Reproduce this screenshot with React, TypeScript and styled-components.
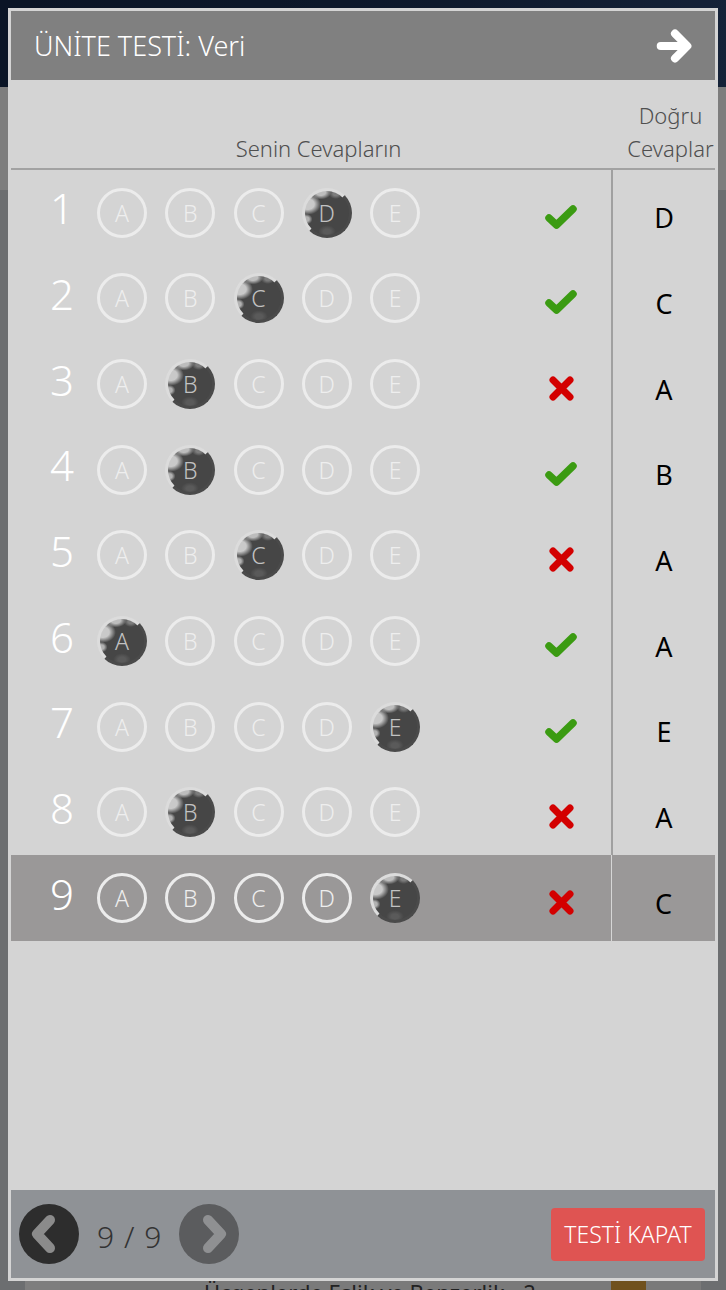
import styled, { createGlobalStyle } from "styled-components";

const GlobalStyle = createGlobalStyle`
  html, body {
    margin: 0;
    padding: 0;
  }
  body {
    width: 726px;
    height: 1290px;
    overflow: hidden;
    font-family: "Noto Sans", "Open Sans", sans-serif;
  }
`;

type Letter = "A" | "B" | "C" | "D" | "E";

interface IAnswer {
  no: number;
  chosen: Letter;
  correct: Letter;
}

const LETTERS: Letter[] = ["A", "B", "C", "D", "E"];

const ANSWERS: IAnswer[] = [
  { no: 1, chosen: "D", correct: "D" },
  { no: 2, chosen: "C", correct: "C" },
  { no: 3, chosen: "B", correct: "A" },
  { no: 4, chosen: "B", correct: "B" },
  { no: 5, chosen: "C", correct: "A" },
  { no: 6, chosen: "A", correct: "A" },
  { no: 7, chosen: "E", correct: "E" },
  { no: 8, chosen: "B", correct: "A" },
  { no: 9, chosen: "E", correct: "C" },
];

const ACTIVE_QUESTION = 9;

const LESSONS = ["Üçgenlerde Eşlik ve Benzerlik - 2 -"];

/* ---------- page behind the dialog ---------- */

const Page = styled.div`
  display: flex;
  flex-direction: column;
  height: 1290px;
  overflow: hidden;
  background: #d8dce0;
`;

const NavBar = styled.header`
  height: 87px;
  flex-shrink: 0;
  background: linear-gradient(90deg, #14284a 0%, #1c3358 60%, #2a4470 100%);
`;

const SubBar = styled.div`
  height: 103px;
  flex-shrink: 0;
  background: #fafafa;
`;

const LessonList = styled.ul`
  list-style: none;
  margin: auto 0 -42px;
  padding: 0 25px;
`;

const LessonItem = styled.li`
  height: 80px;
  display: flex;
  align-items: center;
  padding-left: 144px;
  background: #f4f4f4;
  border-left: 35px solid #fcfcfc;
  font-size: 22px;
  color: #444444;
`;

const LessonBadge = styled.span`
  margin-left: auto;
  margin-right: 55px;
  width: 35px;
  height: 35px;
  border-radius: 3px;
  background: #e0a23a;
`;

const Backdrop = styled.div`
  position: fixed;
  inset: 0;
  background: rgba(0, 0, 0, 0.5);
`;

/* ---------- dialog ---------- */

const Dialog = styled.section`
  position: fixed;
  top: 8px;
  left: 8px;
  width: 710px;
  height: 1273px;
  box-sizing: border-box;
  padding: 3px;
  display: flex;
  flex-direction: column;
  background: #d4d4d4;
`;

const DialogHeader = styled.div`
  height: 69px;
  flex-shrink: 0;
  display: flex;
  align-items: center;
  justify-content: space-between;
  padding: 0 21px 0 23px;
  background: #808080;
`;

const Title = styled.h1`
  margin: 0;
  font-size: 27px;
  font-weight: 300;
  font-stretch: semi-condensed;
  color: #ffffff;
`;

const IconButton = styled.button`
  display: flex;
  padding: 0;
  border: none;
  background: none;
  cursor: pointer;
`;

const ColumnHeads = styled.div`
  height: 90px;
  flex-shrink: 0;
  box-sizing: border-box;
  display: grid;
  grid-template-columns: 1fr 104px;
  align-items: end;
  padding-bottom: 3px;
  border-bottom: 2px solid #a2a2a2;
`;

const HeadText = styled.div<{ $shift: number }>`
  font-size: 22px;
  font-weight: 300;
  font-stretch: semi-condensed;
  line-height: 33px;
  color: #4f4f4f;
  text-align: center;
  white-space: nowrap;
  padding-left: ${(p) => p.$shift}px;
`;

const Rows = styled.div`
  display: flex;
  flex-direction: column;
`;

const Row = styled.div<{ $active: boolean }>`
  height: 85.67px;
  display: grid;
  grid-template-columns: 1fr 104px;
  background: ${(p) => (p.$active ? "#9a9898" : "transparent")};
`;

const AnswerCell = styled.div`
  display: flex;
  align-items: center;
  padding-left: 25px;
`;

const QuestionNo = styled.span`
  width: 52px;
  margin-right: 9px;
  margin-bottom: 10px;
  text-align: center;
  font-size: 42px;
  font-weight: 300;
  color: #ffffff;
`;

const Bubbles = styled.div`
  display: flex;
  gap: 18.25px;
`;

// pencil-filled bubble: dark fill with ragged light gaps near the top-left rim
const Bubble = styled.span<{ $filled: boolean }>`
  width: 50px;
  height: 50px;
  box-sizing: border-box;
  border-radius: 50%;
  border: 3px solid #ececec;
  display: flex;
  align-items: center;
  justify-content: center;
  font-size: 23px;
  font-weight: 300;
  font-stretch: semi-condensed;
  color: ${(p) => (p.$filled ? "#c2c2c2" : "#eeeeee")};
  ${(p) =>
    p.$filled &&
    `
    border-color: #dcdcdc #4a4a4a #4a4a4a #dcdcdc;
    background:
      radial-gradient(ellipse 30% 24% at 6% 30%, #c9c9c9 0 50%, transparent 100%),
      radial-gradient(ellipse 24% 16% at 36% 3%, #bdbdbd 0 45%, transparent 100%),
      radial-gradient(ellipse 14% 12% at 3% 64%, #b2b2b2 0 45%, transparent 100%),
      radial-gradient(ellipse 16% 12% at 70% 6%, #7c7c7c 0 40%, transparent 100%),
      radial-gradient(ellipse 20% 14% at 50% 92%, #5a5a5a 0 40%, transparent 100%),
      #464646;
  `}
`;

const MarkSlot = styled.span`
  margin-left: auto;
  margin-right: 30px;
  margin-top: 8px;
  width: 40px;
  display: flex;
  justify-content: center;
`;

const CorrectCell = styled.div<{ $active: boolean }>`
  display: flex;
  align-items: center;
  justify-content: center;
  padding-top: 10px;
  box-sizing: border-box;
  border-left: ${(p) => (p.$active ? "1px solid #d6d6d6" : "2px solid #a0a0a0")};
  font-size: 27px;
  color: #000000;
`;

const DialogBody = styled.div`
  flex: 1;
`;

const Footer = styled.footer`
  height: 88px;
  flex-shrink: 0;
  display: flex;
  align-items: center;
  padding: 0 10px 0 8px;
  background: #8f9296;
`;

const PageButton = styled.button<{ $dark: boolean }>`
  width: 60px;
  height: 60px;
  padding: 0;
  border: none;
  border-radius: 50%;
  display: flex;
  background: ${(p) => (p.$dark ? "#2d2d2d" : "#5b5c5e")};
  cursor: pointer;
`;

const PageCount = styled.span`
  margin: 4px 18px 0 18px;
  font-size: 30px;
  font-weight: 300;
  font-stretch: semi-condensed;
  word-spacing: 2px;
  color: #333333;
`;

const CloseButton = styled.button`
  margin-left: auto;
  width: 154px;
  height: 53px;
  border: none;
  border-radius: 4px;
  background: #df5452;
  font-family: inherit;
  font-size: 23px;
  font-weight: 300;
  font-stretch: semi-condensed;
  color: #ffffff;
  cursor: pointer;
`;

/* ---------- icons ---------- */

const ArrowRight = () => (
  <svg width="38" height="38" viewBox="0 0 40 40" fill="none">
    <path
      d="M5 20 H32 M20 7 L33 20 L20 33"
      stroke="#ffffff"
      strokeWidth="8.5"
      strokeLinecap="round"
      strokeLinejoin="round"
    />
  </svg>
);

const CheckMark = () => (
  <svg width="34" height="26" viewBox="0 0 34 26" fill="none">
    <path
      d="M5 14 L12.5 21 L29 5"
      stroke="#3b9b12"
      strokeWidth="7.5"
      strokeLinecap="round"
      strokeLinejoin="round"
    />
  </svg>
);

const CrossMark = () => (
  <svg width="27" height="27" viewBox="0 0 27 27" fill="none">
    <path
      d="M5 5 L22 22 M22 5 L5 22"
      stroke="#d30000"
      strokeWidth="7"
      strokeLinecap="round"
    />
  </svg>
);

const Chevron = ({ dir, color }: { dir: "left" | "right"; color: string }) => (
  <svg width="60" height="60" viewBox="0 0 60 60" fill="none">
    <path
      d={dir === "left" ? "M31 16 L18 30 L31 44" : "M29 16 L42 30 L29 44"}
      stroke={color}
      strokeWidth="10"
      strokeLinecap="round"
      strokeLinejoin="round"
    />
  </svg>
);

/* ---------- app ---------- */

const AnswerRow = ({ answer }: { answer: IAnswer }) => {
  const isActive = answer.no === ACTIVE_QUESTION;
  const isRight = answer.chosen === answer.correct;

  return (
    <Row $active={isActive}>
      <AnswerCell>
        <QuestionNo>{answer.no}</QuestionNo>
        <Bubbles>
          {LETTERS.map((letter) => (
            <Bubble key={letter} $filled={letter === answer.chosen}>
              {letter}
            </Bubble>
          ))}
        </Bubbles>
        <MarkSlot>{isRight ? <CheckMark /> : <CrossMark />}</MarkSlot>
      </AnswerCell>
      <CorrectCell $active={isActive}>{answer.correct}</CorrectCell>
    </Row>
  );
};

export default function App() {
  return (
    <>
      <GlobalStyle />
      <Page>
        <NavBar />
        <SubBar />
        <LessonList>
          {LESSONS.map((lesson) => (
            <LessonItem key={lesson}>
              {lesson}
              <LessonBadge />
            </LessonItem>
          ))}
        </LessonList>
      </Page>
      <Backdrop />
      <Dialog>
        <DialogHeader>
          <Title>ÜNİTE TESTİ: Veri</Title>
          <IconButton aria-label="İleri">
            <ArrowRight />
          </IconButton>
        </DialogHeader>
        <ColumnHeads>
          <HeadText $shift={15}>Senin Cevapların</HeadText>
          <HeadText $shift={15}>
            Doğru
            <br />
            Cevaplar
          </HeadText>
        </ColumnHeads>
        <Rows>
          {ANSWERS.map((answer) => (
            <AnswerRow key={answer.no} answer={answer} />
          ))}
        </Rows>
        <DialogBody />
        <Footer>
          <PageButton $dark aria-label="Önceki">
            <Chevron dir="left" color="#8b8b8b" />
          </PageButton>
          <PageCount>9 / 9</PageCount>
          <PageButton $dark={false} aria-label="Sonraki">
            <Chevron dir="right" color="#8f9092" />
          </PageButton>
          <CloseButton>TESTİ KAPAT</CloseButton>
        </Footer>
      </Dialog>
    </>
  );
}
